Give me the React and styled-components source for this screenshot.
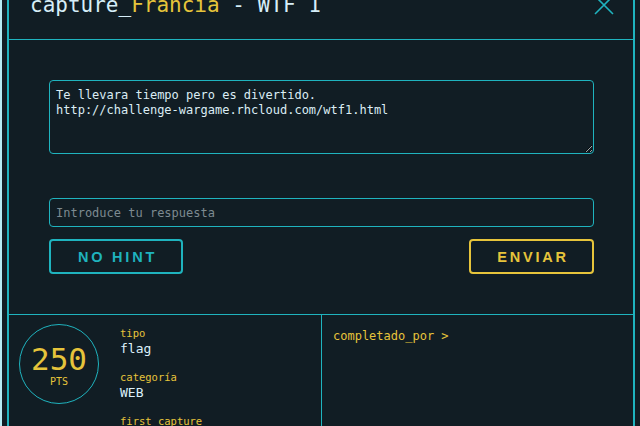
import React from 'react'
import styled, { createGlobalStyle } from 'styled-components'

const cyan = '#1fb3be'
const yellow = '#e6c43b'
const bg = '#111d24'
const mono = '"DejaVu Sans Mono", "Liberation Mono", monospace'

const GlobalStyle = createGlobalStyle`
    html, body {
        margin: 0;
        padding: 0;
        background: ${bg};
        overflow: hidden;
    }
    * { box-sizing: border-box; }
`;

const Page = styled.div`
    display: flex;
    align-items: flex-start;
    width: 640px;
    height: 426px;
    padding: 0 5px 0 5px;
    border-left: 2px solid #b6ecf4;
    overflow: hidden;
`;

const Modal = styled.div`
    width: 628px;
    flex-shrink: 0;
    margin-top: -22px;
    border: 2px solid ${cyan};
    border-bottom: none;
    background: ${bg};
    display: flex;
    flex-direction: column;
`;

const Header = styled.div`
    height: 60px;
    flex-shrink: 0;
    display: flex;
    align-items: center;
    justify-content: space-between;
    padding: 0 19px 9px 21px;
    border-bottom: 1px solid ${cyan};
`;

const Title = styled.h2`
    margin: 0;
    font-family: ${mono};
    font-weight: normal;
    font-size: 21px;
    line-height: 24px;
    color: #d6eef8;
`;

const Highlight = styled.span`
    color: ${yellow};
`;

const Close = styled.button`
    background: none;
    border: none;
    padding: 0;
    width: 20px;
    height: 20px;
    display: flex;
    cursor: pointer;
`;

const Body = styled.div`
    padding: 40px 39px 40px 40px;
    display: flex;
    flex-direction: column;
`;

const Description = styled.textarea`
    height: 74px;
    width: 100%;
    background: transparent;
    border: 1px solid ${cyan};
    border-radius: 4px;
    padding: 7px 6px;
    font-family: ${mono};
    font-size: 12px;
    line-height: 15px;
    color: #dcedf5;
    outline: none;
    resize: vertical;
    display: block;
`;

const Answer = styled.input`
    margin-top: 44px;
    height: 29px;
    width: 100%;
    background: transparent;
    border: 1px solid ${cyan};
    border-radius: 4px;
    padding: 0 6px;
    font-family: ${mono};
    font-size: 12px;
    color: #dcedf5;
    outline: none;

    &::placeholder {
        color: #7d8a90;
    }
`;

const Actions = styled.div`
    margin-top: 12px;
    display: flex;
    justify-content: space-between;
`;

const ActionButton = styled.button`
    width: ${p => p.$width}px;
    height: 35px;
    background: transparent;
    border: 2px solid ${p => p.$color};
    border-radius: 4px;
    color: ${p => p.$color};
    font-family: "Liberation Sans", Arial, sans-serif;
    font-weight: bold;
    font-size: 14.5px;
    letter-spacing: 2.8px;
    padding: 0 0 0 3px;
    cursor: pointer;
`;

const Stats = styled.div`
    display: grid;
    grid-template-columns: 312px 1fr;
    border-top: 1px solid ${cyan};
    height: 150px;
`;

const Summary = styled.div`
    display: flex;
    align-items: flex-start;
    gap: 21px;
    padding: 9px 0 0 10px;
`;

const Points = styled.div`
    width: 80px;
    height: 80px;
    flex-shrink: 0;
    border-radius: 50%;
    border: 1px solid ${cyan};
    display: flex;
    flex-direction: column;
    align-items: center;
    justify-content: center;
    color: ${yellow};
    font-family: ${mono};
    padding-top: 4px;
`;

const PointsValue = styled.div`
    font-size: 31px;
    line-height: 30px;
`;

const PointsUnit = styled.div`
    font-size: 10px;
    line-height: 12px;
    margin-top: 2px;
`;

const Info = styled.div`
    display: flex;
    flex-direction: column;
    gap: 13px;
    margin-top: 2px;
`;

const InfoItem = styled.div`
    display: flex;
    flex-direction: column;
`;

const Label = styled.div`
    font-family: ${mono};
    font-size: 10.5px;
    line-height: 14px;
    color: ${yellow};
`;

const Value = styled.div`
    font-family: ${mono};
    font-size: 13px;
    line-height: 17px;
    min-height: 17px;
    color: #dcf0fa;
`;

const Completed = styled.div`
    border-left: 1px solid ${cyan};
    padding: 11px 11px;
`;

const CompletedLink = styled.a`
    font-family: ${mono};
    font-size: 12px;
    line-height: 16px;
    color: ${yellow};
    text-decoration: none;
    cursor: pointer;
`;

const info = [
    { label: 'tipo', value: 'flag' },
    { label: 'categoría', value: 'WEB' },
    { label: 'first_capture', value: '' },
]

export default function App() {
    return (
        <>
            <GlobalStyle />
            <Page>
                <Modal>
                    <Header>
                        <Title>capture_<Highlight>Francia</Highlight> - WTF 1</Title>
                        <Close aria-label="cerrar">
                            <svg width="20" height="20" viewBox="0 0 20 20">
                                <path d="M1 1 L19 19 M19 1 L1 19" stroke={cyan} strokeWidth="1.6" fill="none" />
                            </svg>
                        </Close>
                    </Header>
                    <Body>
                        <Description
                            readOnly
                            value={"Te llevara tiempo pero es divertido.\nhttp://challenge-wargame.rhcloud.com/wtf1.html"}
                        />
                        <Answer placeholder="Introduce tu respuesta" />
                        <Actions>
                            <ActionButton $color={cyan} $width={134}>NO HINT</ActionButton>
                            <ActionButton $color={yellow} $width={125}>ENVIAR</ActionButton>
                        </Actions>
                    </Body>
                    <Stats>
                        <Summary>
                            <Points>
                                <PointsValue>250</PointsValue>
                                <PointsUnit>PTS</PointsUnit>
                            </Points>
                            <Info>
                                {info.map(item => (
                                    <InfoItem key={item.label}>
                                        <Label>{item.label}</Label>
                                        <Value>{item.value}</Value>
                                    </InfoItem>
                                ))}
                            </Info>
                        </Summary>
                        <Completed>
                            <CompletedLink>completado_por &gt;</CompletedLink>
                        </Completed>
                    </Stats>
                </Modal>
            </Page>
        </>
    )
}
